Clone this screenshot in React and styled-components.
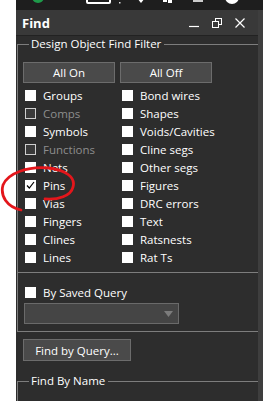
import React from "react";
import styled, { createGlobalStyle } from "styled-components";

const GlobalStyle = createGlobalStyle`
  html, body { margin: 0; padding: 0; background: #ffffff; }
  body { font-family: "Open Sans", "Noto Sans", sans-serif; }
`;

const leftItems = [
  { label: "Groups" },
  { label: "Comps", disabled: true },
  { label: "Symbols" },
  { label: "Functions", disabled: true },
  { label: "Nets" },
  { label: "Pins", checked: true },
  { label: "Vias" },
  { label: "Fingers" },
  { label: "Clines" },
  { label: "Lines" },
];

const rightItems = [
  "Bond wires",
  "Shapes",
  "Voids/Cavities",
  "Cline segs",
  "Other segs",
  "Figures",
  "DRC errors",
  "Text",
  "Ratsnests",
  "Rat Ts",
];

function CheckRow({ label, checked, disabled }) {
  return (
    <Row>
      <Box $disabled={disabled}>
        {checked && (
          <svg width="11" height="11" viewBox="0 0 11 11">
            <path d="M2 5.5 L4.3 8 L9 2" fill="none" stroke="#000" strokeWidth="1.2" />
          </svg>
        )}
      </Box>
      <Label $disabled={disabled}>{label}</Label>
    </Row>
  );
}

function App() {
  const rows = leftItems.map((item, i) => [item, { label: rightItems[i] }]);
  return (
    <Screen>
      <GlobalStyle />
      <WhiteGap />
      <Main>
        <Toolbar>
          <svg width="247" height="10" viewBox="0 0 247 10">
            <circle cx="22" cy="-3" r="6" fill="#1e9a4a" />
            <rect x="71" y="-5" width="23" height="8" rx="1" fill="none" stroke="#fff" strokeWidth="2" />
            <rect x="103" y="2" width="1.5" height="1.5" fill="#ddd" />
            <path d="M121 -2 L129 -2 L125 3 Z" fill="#fff" />
            <rect x="147" y="-2" width="4" height="4" fill="#fff" />
            <rect x="152" y="-2" width="4" height="5" fill="#fff" />
            <rect x="177" y="-3" width="10" height="5" fill="#ccc" />
            <circle cx="216" cy="-3" r="7" fill="#fff" />
          </svg>
        </Toolbar>
        <Body>
          <Content>
            <TitleBar>
              <Title>Find</Title>
              <WinButtons>
                <svg width="10" height="10" viewBox="0 0 10 10">
                  <path d="M0 8.5 H10" stroke="#fff" strokeWidth="1.2" />
                </svg>
                <svg width="10" height="10" viewBox="0 0 10 10">
                  <rect x="3.5" y="0.5" width="6" height="6" fill="none" stroke="#fff" strokeWidth="1" />
                  <rect x="0.5" y="3.5" width="6" height="6" fill="#393939" stroke="#fff" strokeWidth="1" />
                </svg>
                <svg width="10" height="10" viewBox="0 0 10 10">
                  <path d="M0.5 0.5 L9.5 9.5 M9.5 0.5 L0.5 9.5" stroke="#fff" strokeWidth="1.2" />
                </svg>
              </WinButtons>
            </TitleBar>
            <Panel>
              <Group>
                <Legend>Design Object Find Filter</Legend>
                <ButtonRow>
                  <Button>All On</Button>
                  <Button>All Off</Button>
                </ButtonRow>
                <Grid>
                  {rows.map(([l, r]) => (
                    <React.Fragment key={l.label}>
                      <CheckRow {...l} />
                      <CheckRow {...r} />
                    </React.Fragment>
                  ))}
                </Grid>
                <Separator />
                <SavedRow>
                  <CheckRow label="By Saved Query" />
                </SavedRow>
                <Select>
                  <svg width="9" height="6" viewBox="0 0 9 6">
                    <path d="M0 0 H9 L4.5 6 Z" fill="#7c7c7c" />
                  </svg>
                </Select>
              </Group>
              <QueryButton>Find by Query...</QueryButton>
              <Group $last>
                <Legend>Find By Name</Legend>
              </Group>
            </Panel>
          </Content>
          <ScrollStrip />
        </Body>
      </Main>
      <Annotation width="80" height="50" viewBox="0 0 80 50">
        <path
          d="M21 45 C7 42 0 31 3 20 C8 8 28 1 49 3 C65 5 76 12 73 22 C71 31 58 35 45 34"
          fill="none"
          stroke="#e3161b"
          strokeWidth="2.8"
          strokeLinecap="round"
        />
      </Annotation>
    </Screen>
  );
}

const Screen = styled.div`
  position: relative;
  width: 263px;
  height: 401px;
  overflow: hidden;
  display: flex;
  background: #fff;
`;

const WhiteGap = styled.div`
  width: 16px;
  flex-shrink: 0;
  background: #fff;
`;

const Main = styled.div`
  flex: 1;
  display: flex;
  flex-direction: column;
  background: #2d2d2d;
`;

const Toolbar = styled.div`
  height: 10px;
  background: #1e1e1e;
  display: flex;
  svg {
    display: block;
  }
`;

const Body = styled.div`
  flex: 1;
  display: flex;
`;

const Content = styled.div`
  flex: 1;
  display: flex;
  flex-direction: column;
`;

const ScrollStrip = styled.div`
  width: 5px;
  background: #3e3e3e;
`;

const TitleBar = styled.div`
  height: 25px;
  background: #393939;
  border-bottom: 1px solid #222;
  display: flex;
  align-items: center;
  justify-content: space-between;
  padding: 0 13px 0 6px;
`;

const Title = styled.div`
  color: #fff;
  font-weight: 700;
  font-size: 13px;
  line-height: 16px;
`;

const WinButtons = styled.div`
  display: flex;
  align-items: center;
  gap: 13px;
  svg {
    display: block;
  }
`;

const Panel = styled.div`
  display: flex;
  flex-direction: column;
  padding-left: 1px;
`;

const Group = styled.fieldset`
  margin: 0;
  padding: 0 0 ${(p) => (p.$last ? "40px" : "7px")} 5px;
  border: 1px solid #7d7d7d;
  border-right: none;
  min-width: 0;
  margin-top: ${(p) => (p.$last ? "12px" : "0")};
`;

const Legend = styled.legend`
  color: #fff;
  font-size: 11.5px;
  line-height: 16px;
  padding: 0 3px 0 2px;
  margin-left: 6px;
`;

const ButtonRow = styled.div`
  display: flex;
  gap: 5px;
  margin-top: 10px;
`;

const Button = styled.div`
  width: 90px;
  height: 19px;
  background: #4a4a4a;
  border: 1px solid #6c6c6c;
  color: #fff;
  font-size: 11.5px;
  display: flex;
  align-items: center;
  justify-content: center;
`;

const Grid = styled.div`
  display: grid;
  grid-template-columns: 97px 97px;
  grid-auto-rows: 18px;
  margin-top: 3px;
`;

const Row = styled.div`
  display: flex;
  align-items: center;
  height: 18px;
  padding-left: 2px;
`;

const Box = styled.div`
  width: 11px;
  height: 11px;
  box-sizing: border-box;
  background: ${(p) => (p.$disabled ? "#3a3a3a" : "#fff")};
  border: ${(p) => (p.$disabled ? "1px solid #cfcfcf" : "none")};
  margin-right: 7px;
  svg {
    display: block;
  }
`;

const Label = styled.span`
  color: ${(p) => (p.$disabled ? "#8d8d8d" : "#fff")};
  font-size: 11.5px;
  white-space: nowrap;
`;

const Separator = styled.div`
  height: 1px;
  background: #7d7d7d;
  margin: 6px 0 0 -5px;
`;

const SavedRow = styled.div`
  margin-top: 10px;
`;

const Select = styled.div`
  margin: 2px 0 0 1px;
  width: 148px;
  height: 19px;
  background: #454545;
  border: 1px solid #6a6a6a;
  display: flex;
  align-items: center;
  justify-content: flex-end;
  padding-right: 5px;
  svg {
    display: block;
  }
`;

const QueryButton = styled(Button)`
  width: 106px;
  height: 20px;
  margin: 7px 0 0 6px;
`;

const Annotation = styled.svg`
  position: absolute;
  left: 0;
  top: 165px;
  pointer-events: none;
`;

export default App;
